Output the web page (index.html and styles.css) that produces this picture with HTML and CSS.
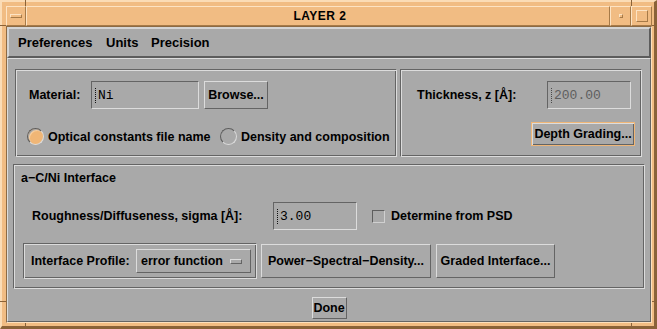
FILE: index.html
```html
<!DOCTYPE html>
<html>
<head>
<meta charset="utf-8">
<link rel="stylesheet" href="styles.css">
</head>
<body>
<div class="window">
  <span class="tick tick-tl-v"></span>
  <span class="tick tick-tl-h"></span>
  <span class="tick tick-tr-v"></span>
  <span class="tick tick-tr-h"></span>
  <span class="tick tick-bl-v"></span>
  <span class="tick tick-bl-h"></span>
  <span class="tick tick-br-v"></span>
  <span class="tick tick-br-h"></span>
  <div class="titlebar">
    <div class="tb-seg tb-menu"><span class="menu-icon"></span></div>
    <div class="tb-seg tb-title">LAYER 2</div>
    <div class="tb-seg tb-min"><span class="min-icon"></span></div>
    <div class="tb-seg tb-max"><span class="max-icon"></span></div>
  </div>
  <div class="client">
    <div class="menubar">
      <span class="menu-item mi-pref">Preferences</span>
      <span class="menu-item mi-units">Units</span>
      <span class="menu-item">Precision</span>
    </div>
    <div class="form">
      <div class="top-row">
        <div class="frame box1">
          <div class="row">
            <span class="label mat-label">Material:</span>
            <div class="field mat-field"><span class="cursor"></span>Ni</div>
            <button class="btn browse">Browse...</button>
          </div>
          <div class="row radio-row">
            <div class="radio-item first">
              <span class="radio on"></span>
              <span class="radio-label">Optical constants file name</span>
            </div>
            <div class="radio-item">
              <span class="radio"></span>
              <span class="radio-label">Density and composition</span>
            </div>
          </div>
        </div>
        <div class="frame box2">
          <div class="row">
            <span class="label thick-label">Thickness, z [Å]:</span>
            <div class="field num-field disabled"><span class="cursor dim"></span>200.00</div>
          </div>
          <button class="btn depth">Depth Grading...</button>
        </div>
      </div>
      <div class="frame box3">
        <div class="box3-title">a−C/Ni Interface</div>
        <div class="row rough-row">
          <span class="label rough-label">Roughness/Diffuseness, sigma [Å]:</span>
          <div class="field num-field"><span class="cursor"></span>3.00</div>
          <span class="checkbox"></span>
          <span class="check-label">Determine from PSD</span>
        </div>
        <div class="row bottom-row">
          <div class="frame profile">
            <span class="label profile-label">Interface Profile:</span>
            <div class="option">
              <span>error function</span>
              <span class="option-ind"></span>
            </div>
          </div>
          <button class="btn psd">Power−Spectral−Density...</button>
          <button class="btn graded">Graded Interface...</button>
        </div>
      </div>
      <div class="done-row">
        <button class="btn done">Done</button>
      </div>
    </div>
  </div>
</div>
</body>
</html>
```
FILE: styles.css
```css
* { box-sizing: border-box; }

html, body {
  margin: 0;
  padding: 0;
}

body {
  background: #a9a9a9;
  font-family: "Liberation Sans", Arial, sans-serif;
  font-weight: bold;
  font-size: 12.5px;
  color: #000;
}

.window {
  position: relative;
  width: 657px;
  height: 329px;
  background: #f1bc83;
  border-style: solid;
  border-width: 2px 3px 3px 2px;
  border-color: #fbdcb6 #8a6238 #8a6238 #fbdcb6;
  padding: 4px 2px 3px 4px;
  display: flex;
  flex-direction: column;
}

/* resize-handle ticks on the frame */
.tick {
  position: absolute;
  background: #8a6238;
}
.tick-tl-v { left: 23px; top: -2px; width: 1px; height: 6px; }
.tick-tl-h { left: -2px; top: 23px; width: 6px; height: 1px; }
.tick-tr-v { left: 629px; top: -2px; width: 1px; height: 6px; }
.tick-tr-h { right: -3px; top: 23px; width: 5px; height: 1px; }
.tick-bl-v { left: 23px; bottom: -3px; width: 1px; height: 6px; }
.tick-bl-h { left: -2px; bottom: 24px; width: 6px; height: 1px; }
.tick-br-v { left: 629px; bottom: -3px; width: 1px; height: 6px; }
.tick-br-h { right: -3px; bottom: 24px; width: 5px; height: 1px; }

/* title bar */
.titlebar {
  display: flex;
  height: 20px;
  flex: none;
}
.tb-seg {
  border: 1px solid;
  border-color: #fde3c3 #a67a48 #a67a48 #fde3c3;
  display: flex;
  align-items: center;
  justify-content: center;
}
.tb-menu { width: 20px; }
.tb-title {
  flex: 1;
  font-size: 12px;
  letter-spacing: 0.5px;
  padding-left: 4px;
}
.tb-min { width: 21px; }
.tb-max { width: 21px; }
.menu-icon {
  width: 12px;
  height: 4px;
  border: 1px solid;
  border-color: #fde3c3 #a67a48 #a67a48 #fde3c3;
}
.min-icon {
  width: 4px;
  height: 4px;
  border: 1px solid;
  border-color: #fde3c3 #a67a48 #a67a48 #fde3c3;
}
.max-icon {
  width: 12px;
  height: 12px;
  border: 1px solid;
  border-color: #fde3c3 #a67a48 #a67a48 #fde3c3;
}

/* client area */
.client {
  flex: 1;
  display: flex;
  flex-direction: column;
  border: 1px solid;
  border-color: #8c6a44 #fde0bd #fde0bd #8c6a44;
  background: #a9a9a9;
}

.menubar {
  flex: none;
  height: 31px;
  border: 2px solid;
  border-color: #d4d4d4 #5c5c5c #5c5c5c #d4d4d4;
  display: flex;
  align-items: center;
  padding-left: 9px;
  font-size: 13px;
}
.mi-pref { width: 88px; }
.mi-units { width: 45px; }

.form {
  flex: 1;
  border: 1px solid;
  border-color: #dcdcdc #646464 #646464 #dcdcdc;
}

.top-row {
  display: flex;
  gap: 3px;
  margin: 10px 0 0 7px;
}

.frame {
  border: 1px solid;
  border-color: #646464 #dcdcdc #dcdcdc #646464;
  box-shadow: inset 1px 1px 0 #dcdcdc, inset -1px -1px 0 #646464;
}

.row {
  display: flex;
  align-items: center;
}

.label { flex: none; }

.field {
  flex: none;
  height: 28px;
  border: 1px solid;
  border-color: #646464 #dcdcdc #dcdcdc #646464;
  display: flex;
  align-items: center;
  padding-left: 3px;
  font-family: "Liberation Mono", "DejaVu Sans Mono", monospace;
  font-weight: normal;
  font-size: 13px;
}
.field.disabled { color: #5e5e5e; }

.cursor {
  display: inline-block;
  width: 1px;
  height: 15px;
  border-left: 1px dotted #111;
  margin-right: 2px;
}
.cursor.dim { border-left-color: #4a4a4a; }

.btn {
  flex: none;
  margin: 0;
  padding: 0;
  font: inherit;
  color: #000;
  background: #a9a9a9;
  border: 1px solid;
  border-color: #dcdcdc #646464 #646464 #dcdcdc;
  display: flex;
  align-items: center;
  justify-content: center;
  white-space: nowrap;
}

/* box 1 */
.box1 {
  width: 382px;
  height: 88px;
  padding: 11px 0 0 13px;
}
.mat-label { width: 62px; }
.mat-field { width: 108px; }
.browse {
  width: 64px;
  height: 28px;
  margin-left: 5px;
}
.radio-row {
  margin-top: 19px;
  margin-left: -2px;
}
.radio-item {
  display: flex;
  align-items: center;
}
.radio-item.first { width: 193px; }
.radio {
  width: 17px;
  height: 17px;
  border-radius: 50%;
  border: 1px solid;
  border-color: #5e5e5e #dcdcdc #dcdcdc #5e5e5e;
  flex: none;
}
.radio.on {
  background: #f0b676;
  box-shadow: inset 1px 1px 0 #a9a9a9, inset 2px 2px 0 #f7cd9c;
}
.radio-label { margin-left: 4px; }

/* box 2 */
.box2 {
  width: 242px;
  height: 88px;
  padding: 11px 0 0 16px;
}
.thick-label { width: 130px; }
.num-field { width: 84px; }
.depth {
  width: 104px;
  height: 24px;
  margin: 13px 0 0 114px;
  border-color: #f0b676;
  box-shadow: inset 1px 1px 0 #dcdcdc, inset -1px -1px 0 #646464;
}

/* box 3 */
.box3 {
  width: 632px;
  height: 125px;
  margin: 7px 0 0 5px;
  padding: 6px 0 0 7px;
}
.box3-title {
  height: 14px;
  line-height: 14px;
}
.rough-row {
  margin: 17px 0 0 11px;
}
.rough-label { width: 241px; }
.checkbox {
  flex: none;
  width: 13px;
  height: 13px;
  margin-left: 15px;
  border: 1px solid;
  border-color: #5e5e5e #d0d0d0 #d0d0d0 #5e5e5e;
}
.check-label { margin-left: 6px; }

.bottom-row {
  margin: 13px 0 0 2px;
}
.profile {
  width: 234px;
  height: 36px;
  padding-left: 7px;
  display: flex;
  align-items: center;
}
.profile-label { width: 105px; }
.option {
  width: 115px;
  height: 24px;
  border: 1px solid;
  border-color: #dcdcdc #646464 #646464 #dcdcdc;
  display: flex;
  align-items: center;
  justify-content: space-between;
  padding: 0 8px 0 4px;
}
.option-ind {
  width: 12px;
  height: 5px;
  border: 1px solid;
  border-color: #dcdcdc #646464 #646464 #dcdcdc;
}
.psd {
  width: 170px;
  height: 34px;
  margin-left: 4px;
}
.graded {
  width: 119px;
  height: 34px;
  margin-left: 5px;
}

.done-row {
  display: flex;
  justify-content: center;
  margin-top: 8px;
}
.done {
  width: 35px;
  height: 22px;
}
```
